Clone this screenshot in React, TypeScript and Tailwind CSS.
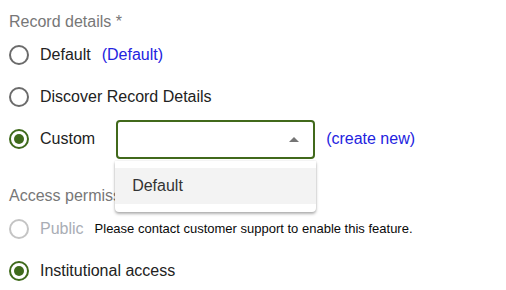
import type { ReactNode } from "react";

const font = { fontFamily: '"Liberation Sans", Arial, sans-serif' };

function Radio({ checked, disabled }: { checked?: boolean; disabled?: boolean }) {
  const ring = disabled ? "border-[#c4c4c4]" : checked ? "border-[#3f6a1b]" : "border-[#6b6b6b]";
  return <span className={`flex size-5 shrink-0 items-center justify-center rounded-full border-2 ${ring}`}>
    {checked && <span className="size-[10px] rounded-full bg-[#3f6a1b]" />}
  </span>;
}

function Row({ children, checked, disabled }: { children: ReactNode; checked?: boolean; disabled?: boolean }) {
  return <div className="flex h-[42px] items-center gap-[11px] pl-[9px]">
    <Radio checked={checked} disabled={disabled} />
    {children}
  </div>;
}

export default function App() {
  return <div className="h-[290px] w-[506px] overflow-hidden bg-white pt-[10px] text-[16px] text-[#222]" style={font}>
    <p className="h-[24px] pl-[9px] leading-[24px] text-[#777]">Record details *</p>
    <Row>
      <span>Default</span>
      <span className="text-[#2323e0]">(Default)</span>
    </Row>
    <Row><span>Discover Record Details</span></Row>
    <Row checked>
      <span>Custom</span>
      <div className="relative ml-[10px]">
        <div className="flex h-[39px] w-[199px] items-center justify-end rounded-[4px] border-2 border-[#41691b] pr-[14px]">
          <svg width="10" height="5" viewBox="0 0 10 5"><path d="M0 5 5 0 10 5Z" fill="#757575" /></svg>
        </div>
        <div className="absolute left-[-1px] top-[41px] z-10 w-[201px] rounded-b-[4px] bg-white pt-[7px] pb-[8px] shadow-[0_2px_3px_rgba(0,0,0,0.3),0_0_2px_rgba(0,0,0,0.12)]">
          <div className="flex h-[36px] items-center bg-[#f3f3f3] pl-[17px] text-[#333]">Default</div>
        </div>
      </div>
      <span className="text-[#2323e0]">(create new)</span>
    </Row>
    <p className="mt-[24px] h-[24px] pl-[9px] leading-[24px] text-[#777]">Access permissions</p>
    <Row disabled>
      <span className="text-[#a9adb5]">Public</span>
      <span className="text-[13px] text-[#0a0a0a]">Please contact customer support to enable this feature.</span>
    </Row>
    <Row checked><span>Institutional access</span></Row>
  </div>;
}
